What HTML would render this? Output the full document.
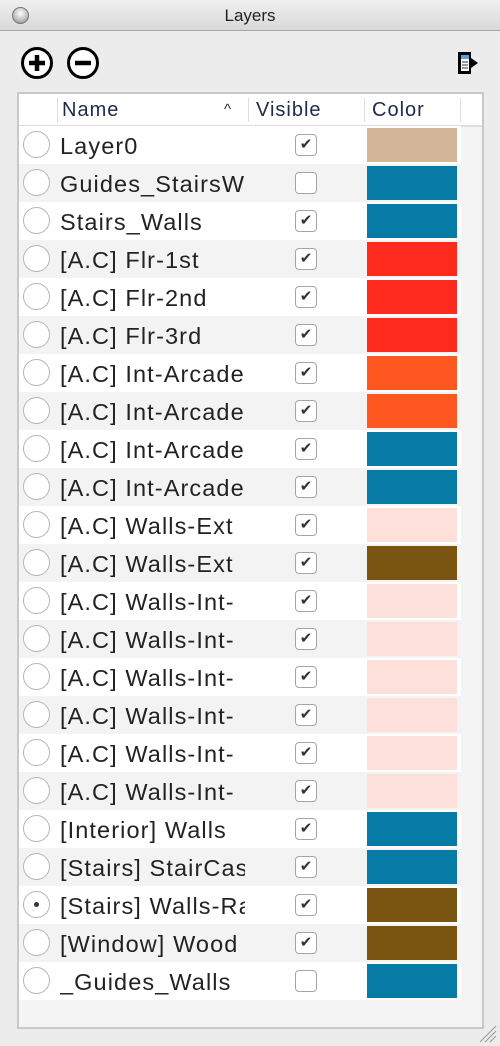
<!DOCTYPE html>
<html><head><style>
*{margin:0;padding:0;box-sizing:border-box}
body{width:500px;height:1046px;background:#ececec;font-family:"Liberation Sans",sans-serif;position:relative;overflow:hidden}
.title{position:absolute;left:0;top:0;width:500px;height:31px;background:linear-gradient(#f0f0f0,#d8d8d8);border-bottom:1px solid #a8a8a8;text-align:center;font-size:17px;line-height:32px;color:#222}
.close{position:absolute;left:12px;top:7px;width:17px;height:17px;border-radius:50%;background:radial-gradient(circle at 50% 35%,#fff,#bbb 60%,#888);border:1px solid #777}
.box{position:absolute;left:17px;top:92px;width:467px;height:937px;background:#f4f4f4;border:2px solid #c8c8c8}
.hdr{position:absolute;left:0;top:0;width:463px;height:33px;background:#fff;border-bottom:2px solid #ddd;font-size:20px;letter-spacing:1px;color:#1e2a4a}
.hdr span{position:absolute;top:5px}
.sep{position:absolute;top:4px;width:1px;height:24px;background:#ddd}
.row{position:absolute;left:0;width:442px;height:38px}
.row.g{background:#f3f3f3}.row.w{background:#fff}
.rad{position:absolute;left:4px;top:5px;width:27px;height:27px;border-radius:50%;border:1.5px solid #b5b5b5;background:#fff}
.dot{position:absolute;left:10px;top:10px;width:5px;height:5px;border-radius:50%;background:#333}
.nm{position:absolute;left:41px;top:5px;width:185px;overflow:hidden;white-space:nowrap;font-size:23.5px;letter-spacing:1.1px;line-height:30px;color:#222}
.cb{position:absolute;left:276px;top:8px;width:22px;height:22px;border:1.5px solid #a5a5a5;border-radius:4px;background:#fff;font-size:15px;line-height:19px;text-align:center;color:#333}
.sw{position:absolute;left:348px;top:2px;width:90px;height:34px}
</style></head><body>
<div class="title"><div class="close"></div>Layers</div>
<svg style="position:absolute;left:20px;top:46px" width="34" height="34" viewBox="0 0 34 34"><circle cx="17" cy="17" r="14.5" fill="#fff" stroke="#000" stroke-width="3"/><path d="M17 9v16M9 17h16" stroke="#000" stroke-width="4.5"/></svg>
<svg style="position:absolute;left:66px;top:46px" width="34" height="34" viewBox="0 0 34 34"><circle cx="17" cy="17" r="14.5" fill="#fff" stroke="#000" stroke-width="3"/><path d="M9 17h16" stroke="#000" stroke-width="4.5"/></svg>
<svg style="position:absolute;left:456px;top:46px" width="26" height="34" viewBox="0 0 26 34"><path d="M2 6h13v6l7 5-7 5v6H2z" fill="#000"/><rect x="5" y="9" width="8" height="16" fill="#fff"/><rect x="5" y="9" width="8" height="4" fill="#5aa0e0"/><path d="M6 16h6M6 19h6M6 22h6" stroke="#333" stroke-width="1"/></svg>
<div class="box">
<div class="hdr"><div class="sep" style="left:38px"></div><span style="left:43px">Name</span><span style="left:205px;font-size:15px;top:7px">^</span><div class="sep" style="left:229px"></div><span style="left:237px">Visible</span><div class="sep" style="left:345px"></div><span style="left:353px">Color</span><div class="sep" style="left:441px"></div></div>
</div>
<svg style="position:absolute;left:478px;top:1024px" width="20" height="20"><path d="M2 18L18 2M7 18L18 7M12 18L18 12" stroke="#999" stroke-width="1"/></svg>
<div style="position:absolute;left:19px;top:127px">
<div class="row w" style="top:-1px"><div class="rad"></div><div class="nm">Layer0</div><div class="cb">✔</div><div class="sw" style="background:#d3b597"></div></div>
<div class="row g" style="top:37px"><div class="rad"></div><div class="nm">Guides_StairsWalls</div><div class="cb"></div><div class="sw" style="background:#077aa6"></div></div>
<div class="row w" style="top:75px"><div class="rad"></div><div class="nm">Stairs_Walls</div><div class="cb">✔</div><div class="sw" style="background:#077aa6"></div></div>
<div class="row g" style="top:113px"><div class="rad"></div><div class="nm">[A.C] Flr-1st</div><div class="cb">✔</div><div class="sw" style="background:#fe2a1e"></div></div>
<div class="row w" style="top:151px"><div class="rad"></div><div class="nm">[A.C] Flr-2nd</div><div class="cb">✔</div><div class="sw" style="background:#fe2a1e"></div></div>
<div class="row g" style="top:189px"><div class="rad"></div><div class="nm">[A.C] Flr-3rd</div><div class="cb">✔</div><div class="sw" style="background:#fe2a1e"></div></div>
<div class="row w" style="top:227px"><div class="rad"></div><div class="nm">[A.C] Int-Arcade</div><div class="cb">✔</div><div class="sw" style="background:#fe5820"></div></div>
<div class="row g" style="top:265px"><div class="rad"></div><div class="nm">[A.C] Int-Arcade</div><div class="cb">✔</div><div class="sw" style="background:#fe5820"></div></div>
<div class="row w" style="top:303px"><div class="rad"></div><div class="nm">[A.C] Int-Arcade</div><div class="cb">✔</div><div class="sw" style="background:#077aa6"></div></div>
<div class="row g" style="top:341px"><div class="rad"></div><div class="nm">[A.C] Int-Arcade</div><div class="cb">✔</div><div class="sw" style="background:#077aa6"></div></div>
<div class="row w" style="top:379px"><div class="rad"></div><div class="nm">[A.C] Walls-Ext</div><div class="cb">✔</div><div class="sw" style="background:#fde0d9"></div></div>
<div class="row g" style="top:417px"><div class="rad"></div><div class="nm">[A.C] Walls-Ext</div><div class="cb">✔</div><div class="sw" style="background:#7a5512"></div></div>
<div class="row w" style="top:455px"><div class="rad"></div><div class="nm">[A.C] Walls-Int-</div><div class="cb">✔</div><div class="sw" style="background:#fde0d9"></div></div>
<div class="row g" style="top:493px"><div class="rad"></div><div class="nm">[A.C] Walls-Int-</div><div class="cb">✔</div><div class="sw" style="background:#fde0d9"></div></div>
<div class="row w" style="top:531px"><div class="rad"></div><div class="nm">[A.C] Walls-Int-</div><div class="cb">✔</div><div class="sw" style="background:#fde0d9"></div></div>
<div class="row g" style="top:569px"><div class="rad"></div><div class="nm">[A.C] Walls-Int-</div><div class="cb">✔</div><div class="sw" style="background:#fde0d9"></div></div>
<div class="row w" style="top:607px"><div class="rad"></div><div class="nm">[A.C] Walls-Int-</div><div class="cb">✔</div><div class="sw" style="background:#fde0d9"></div></div>
<div class="row g" style="top:645px"><div class="rad"></div><div class="nm">[A.C] Walls-Int-</div><div class="cb">✔</div><div class="sw" style="background:#fde0d9"></div></div>
<div class="row w" style="top:683px"><div class="rad"></div><div class="nm">[Interior] Walls</div><div class="cb">✔</div><div class="sw" style="background:#077aa6"></div></div>
<div class="row g" style="top:721px"><div class="rad"></div><div class="nm">[Stairs] StairCase</div><div class="cb">✔</div><div class="sw" style="background:#077aa6"></div></div>
<div class="row w" style="top:759px"><div class="rad"><div class="dot"></div></div><div class="nm">[Stairs] Walls-Rail</div><div class="cb">✔</div><div class="sw" style="background:#7a5512"></div></div>
<div class="row g" style="top:797px"><div class="rad"></div><div class="nm">[Window] Wood</div><div class="cb">✔</div><div class="sw" style="background:#7a5512"></div></div>
<div class="row w" style="top:835px"><div class="rad"></div><div class="nm">_Guides_Walls</div><div class="cb"></div><div class="sw" style="background:#077aa6"></div></div>
</div>
</body></html>
